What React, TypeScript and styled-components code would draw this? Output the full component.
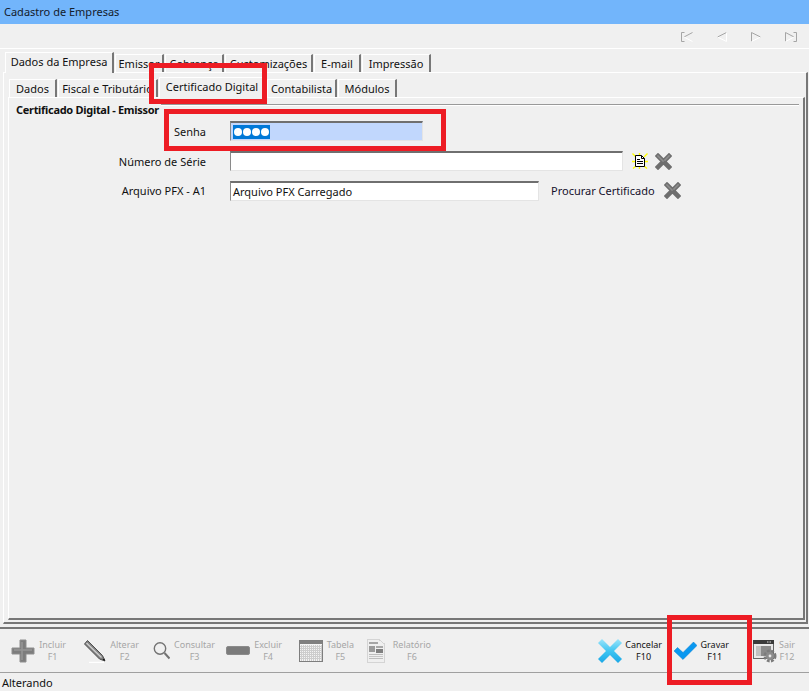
import React from "react";
import styled, { createGlobalStyle } from "styled-components";

const Global = createGlobalStyle`
  html, body {
    margin: 0;
    padding: 0;
    background: #f0f0f0;
  }
  * {
    box-sizing: border-box;
  }
`;

const Window = styled.div`
  position: relative;
  width: 809px;
  height: 691px;
  display: flex;
  flex-direction: column;
  overflow: hidden;
  background: #f0f0f0;
  color: #111;
  font-family: "Noto Sans", "Liberation Sans", sans-serif;
  font-size: 11px;
`;
const TitleBar = styled.div`
  height: 24px;
  flex: none;
  padding: 0 4px 2px;
  display: flex;
  align-items: center;
  background: #72b5fb;
  font-size: 11px;
  color: #14202c;
`;
const NavBar = styled.div`
  height: 25px;
  flex: none;
  display: flex;
  align-items: center;
  justify-content: flex-end;
  gap: 24px;
  padding: 1px 12px 0 0;
  border-bottom: 1px solid #fff;
`;
const Main = styled.div`
  flex: 1;
  min-height: 0;
  display: flex;
  flex-direction: column;
  padding: 3px 1px 3px 3px;
  border-bottom: 2px solid #777;
`;
const TabRow = styled.div<{ $inset: number }>`
  height: 20px;
  flex: none;
  display: flex;
  align-items: flex-end;
  padding-left: ${(p) => p.$inset}px;
  position: relative;
  z-index: 1;
`;
const Tab = styled.div<{ $w: number; $active?: boolean }>`
  width: ${(p) => p.$w}px;
  height: ${(p) => (p.$active ? 21 : 18)}px;
  margin-right: 1px;
  margin-bottom: ${(p) => (p.$active ? -1 : 0)}px;
  display: flex;
  align-items: center;
  justify-content: center;
  padding-bottom: ${(p) => (p.$active ? 3 : 0)}px;
  white-space: nowrap;
  background: #f0f0f0;
  border-top: 1px solid #fff;
  border-left: 1px solid #fff;
  border-right: 2px solid #777;
`;
const OuterPanel = styled.div`
  flex: 1;
  min-height: 0;
  display: flex;
  flex-direction: column;
  padding: 4px 1px 2px 4px;
  border-top: 1px solid #fff;
  border-left: 1px solid #fff;
  border-right: 2px solid #777;
  border-bottom: 2px solid #777;
`;
const InnerPanel = styled.div`
  flex: 1;
  min-height: 0;
  padding: 5px 4px 0 7px;
  border-top: 1px solid #fff;
  border-left: 1px solid #fff;
  border-right: 2px solid #777;
  border-bottom: 2px solid #777;
`;
const GroupTitle = styled.div`
  display: flex;
  align-items: flex-start;
  height: 13px;
  font-weight: 700;
  line-height: 14px;
  letter-spacing: -0.3px;
  white-space: nowrap;
  &::after {
    content: "";
    flex: 1;
    margin: 1px 0 0 2px;
    height: 1px;
    background: #999;
    box-shadow: 0 1px 0 #fff;
  }
`;
const Form = styled.div`
  display: flex;
  flex-direction: column;
`;
const FormRow = styled.div<{ $h: number }>`
  height: ${(p) => p.$h}px;
  display: flex;
  align-items: center;
`;
const Label = styled.div`
  width: 199px;
  padding-right: 9px;
  margin-right: 15px;
  text-align: right;
  white-space: nowrap;
`;
const Field = styled.div<{ $w: number; $selected?: boolean }>`
  width: ${(p) => p.$w}px;
  height: 20px;
  display: flex;
  align-items: center;
  padding-left: 2px;
  background: ${(p) => (p.$selected ? "#c1d7fd" : "#fff")};
  border-top: 2px solid #6f6f6f;
  border-left: 1px solid #8a8a8a;
  border-right: 1px solid #e4e4e4;
  border-bottom: 1px solid #e4e4e4;
`;
const SelectedDots = styled.span`
  display: flex;
  align-items: center;
  gap: 1px;
  height: 14px;
  padding: 0 1px;
  background: #0078d7;
`;
const Dot = styled.span`
  width: 8px;
  height: 8px;
  border-radius: 50%;
  background: #fff;
`;
const SideIcons = styled.div<{ $ml: number }>`
  display: flex;
  align-items: center;
  gap: 7px;
  margin-left: ${(p) => p.$ml}px;
`;
const PickText = styled.span`
  margin-left: 12px;
  margin-right: 9px;
  color: #15102c;
  white-space: nowrap;
`;
const Toolbar = styled.div`
  height: 44px;
  flex: none;
  display: flex;
  align-items: center;
  padding-right: 14px;
  border-bottom: 1px solid #a0a0a0;
`;
const ToolButton = styled.div<{ $w: number; $ml: number; $off?: boolean }>`
  width: ${(p) => p.$w}px;
  margin-left: ${(p) => p.$ml}px;
  display: flex;
  align-items: center;
  justify-content: space-between;
  color: ${(p) => (p.$off ? "#a6a6a6" : "#111")};
`;
const ToolLabel = styled.div`
  display: flex;
  flex-direction: column;
  align-items: center;
  font-size: 9px;
  line-height: 12px;
  white-space: nowrap;
`;
const Spacer = styled.div`
  flex: 1;
`;
const StatusBar = styled.div`
  height: 18px;
  flex: none;
  display: flex;
  align-items: center;
  padding-left: 2px;
  font-size: 11px;
  color: #111;
`;
const Mark = styled.div<{ $x: number; $y: number; $w: number; $h: number }>`
  position: absolute;
  z-index: 5;
  left: ${(p) => p.$x}px;
  top: ${(p) => p.$y}px;
  width: ${(p) => p.$w}px;
  height: ${(p) => p.$h}px;
  border: 5px solid #ed1c24;
  pointer-events: none;
`;

const GrayX = () => (
  <svg width="17" height="17" viewBox="0 0 17 17">
    <path d="M3 3 L14 14 M14 3 L3 14" stroke="#6e6e6e" strokeWidth="4.6" strokeLinecap="square" />
    <path d="M3 3 L8 8 M14 3 L10 7" stroke="#8d8d8d" strokeWidth="1.6" strokeLinecap="square" />
  </svg>
);

const NewDoc = () => (
  <svg width="16" height="16" viewBox="0 0 16 16">
    <path
      d="M0.5 0.5 L4 4 M15.5 0.5 L12 4 M0 8.5 L3.5 8.5 M12.5 8.5 L16 8.5 M1 15.5 L4 13 M15 15.5 L12 13 M7.5 0 L7.5 2 M7.5 14 L7.5 16"
      stroke="#ffff00"
      strokeWidth="1.4"
    />
    <path d="M3.5 2.5 H9.5 L12.5 5.5 V13.5 H3.5 Z" fill="#fff" stroke="#000" />
    <path d="M9.5 2.5 V5.5 H12.5 M5 6.5 H8 M5 8.5 H11 M5 10.5 H11" fill="none" stroke="#000" />
  </svg>
);

const NavFirst = () => (
  <svg width="12" height="10" viewBox="0 0 12 10" fill="none" stroke="#a5a5a5">
    <path d="M3.5 .5 H.5 V9.5 H3.5" />
    <path d="M11.5 .5 L3 5" />
    <path d="M3 5 L11.5 9.5" stroke="#fff" />
  </svg>
);
const NavPrev = () => (
  <svg width="10" height="10" viewBox="0 0 10 10" fill="none" stroke="#a5a5a5">
    <path d="M9.5 .5 L.5 5" />
    <path d="M.5 5 L9.5 9.5 V.5" stroke="#fff" />
  </svg>
);
const NavNext = () => (
  <svg width="10" height="10" viewBox="0 0 10 10" fill="none" stroke="#a5a5a5">
    <path d="M.5 9.5 V.5 L9.5 5" />
    <path d="M9.5 5 L.5 9.5" stroke="#fff" />
  </svg>
);
const NavLast = () => (
  <svg width="12" height="10" viewBox="0 0 12 10" fill="none" stroke="#a5a5a5">
    <path d="M8.5 .5 H11.5 V9.5 H8.5" />
    <path d="M.5 9.5 V.5 L9 5" />
    <path d="M9 5 L.5 9.5" stroke="#fff" />
  </svg>
);

const PlusIcon = () => (
  <svg width="24" height="24" viewBox="0 0 24 24">
    <path d="M9 1 H15 V9 H23 V15 H15 V23 H9 V15 H1 V9 H9 Z" fill="#7d7d7d" stroke="#8f8f8f" strokeLinejoin="round" />
    <path d="M11 3 V21 M3 11 H21" stroke="#969696" strokeWidth="1.5" />
  </svg>
);
const PencilIcon = () => (
  <svg width="22" height="24" viewBox="0 0 22 24">
    <path d="M0.5 5 L3.5 1.5 L18.5 16.5 L21 22 L15.5 20 Z" fill="#808080" stroke="#4f4f4f" />
    <path d="M2.5 4 L17.5 18.5" stroke="#d0d0d0" strokeWidth="1.3" />
    <path d="M18.5 20.5 L21 22 L20.4 19.5 Z" fill="#111" />
    <path d="M5 23.5 H20" stroke="#fff" strokeWidth="1.5" />
  </svg>
);
const SearchIcon = () => (
  <svg width="17" height="19" viewBox="0 0 17 19" fill="none">
    <circle cx="7" cy="7.5" r="5.7" stroke="#737373" strokeWidth="1.4" />
    <path d="M11.5 12 L16.5 17.5" stroke="#737373" strokeWidth="2" />
  </svg>
);
const MinusIcon = () => (
  <svg width="24" height="9" viewBox="0 0 24 9">
    <rect x="0.5" y="0.5" width="23" height="8" rx="1.5" fill="#7b7b7b" stroke="#8b8b8b" />
  </svg>
);
const GridIcon = () => {
  const cols: number[] = [];
  for (let i = 2; i < 24; i += 2) cols.push(i);
  return (
    <svg width="24" height="22" viewBox="0 0 24 22" shapeRendering="crispEdges">
      <rect x="0.5" y="0.5" width="23" height="21" rx="1" fill="#f4f4f4" stroke="#7e7e7e" />
      <rect x="1" y="1" width="22" height="3" fill="#808080" />
      {cols.map((v) => (
        <path key={v} d={`M${v + 0.5} 5 V21`} stroke="#cdcdcd" />
      ))}
      {[6, 8, 10, 12, 14, 16, 18].map((v) => (
        <path key={v} d={`M1 ${v + 0.5} H23`} stroke="#cdcdcd" />
      ))}
    </svg>
  );
};
const ReportIcon = () => (
  <svg width="18" height="24" viewBox="0 0 18 24" shapeRendering="crispEdges">
    <path d="M0.5 0.5 H12 L17.5 5 V23.5 H0.5 Z" fill="#efefef" stroke="#d4d4d4" />
    <rect x="2" y="3" width="9" height="2" fill="#a5a5a5" />
    <rect x="2" y="7" width="6" height="6" fill="#9b9b9b" />
    <rect x="9" y="7" width="7" height="2" fill="#a8a8a8" />
    <rect x="9" y="10" width="7" height="4" fill="#7f7f7f" />
    <rect x="2" y="15" width="14" height="1" fill="#bdbdbd" />
    <rect x="2" y="17" width="14" height="1" fill="#c6c6c6" />
    <rect x="2" y="19" width="14" height="1" fill="#bdbdbd" />
  </svg>
);
const CancelIcon = () => (
  <svg width="24" height="24" viewBox="0 0 24 24">
    <defs>
      <linearGradient id="cancelBlue" x1="0" y1="0" x2="0" y2="1">
        <stop offset="0" stopColor="#9be4fa" />
        <stop offset="0.5" stopColor="#3fc5f2" />
        <stop offset="1" stopColor="#1ba7e6" />
      </linearGradient>
    </defs>
    <path d="M0 4 L4 0 L12 8 L20 0 L24 4 L16 12 L24 20 L20 24 L12 16 L4 24 L0 20 L8 12 Z" fill="url(#cancelBlue)" />
  </svg>
);
const CheckIcon = () => (
  <svg width="23" height="18" viewBox="0 0 23 18">
    <path d="M0 9 L3.5 5.5 L9 10.5 L19.5 0 L23 3.5 L9 17.5 Z" fill="#0a98f0" stroke="#067fd0" strokeWidth="0.5" />
  </svg>
);
const ExitIcon = () => (
  <svg width="24" height="24" viewBox="0 0 24 24">
    <rect x="0.5" y="1.5" width="20" height="18" fill="#e8e8e8" stroke="#666" />
    <rect x="0" y="1" width="21" height="4" fill="#3a3a3a" />
    <path d="M14 3 H15.5 M16.5 3 H18" stroke="#ddd" />
    <rect x="3" y="7" width="15" height="10" fill="#8a8a8a" />
    <rect x="3" y="7" width="5" height="10" fill="#c0c0c0" />
    <circle cx="17" cy="17" r="4.5" fill="none" stroke="#7b7b7b" strokeWidth="4" strokeDasharray="2.4 1.2" />
    <circle cx="17" cy="17" r="4" fill="#8c8c8c" />
    <circle cx="17" cy="17" r="1.4" fill="#e8e8e8" />
  </svg>
);

const outerTabs = [
  { label: "Dados da Empresa", w: 109, active: true },
  { label: "Emissor", w: 49 },
  { label: "Cobrança", w: 59 },
  { label: "Customizações", w: 88 },
  { label: "E-mail", w: 47 },
  { label: "Impressão", w: 69 },
];
const innerTabs = [
  { label: "Dados", w: 48 },
  { label: "Fiscal e Tributário", w: 100 },
  { label: "Certificado Digital", w: 107, active: true },
  { label: "Contabilista", w: 70 },
  { label: "Módulos", w: 59 },
];

const leftTools = [
  { name: "Incluir", key: "F1", icon: <PlusIcon />, w: 55, ml: 11 },
  { name: "Alterar", key: "F2", icon: <PencilIcon />, w: 55, ml: 18 },
  { name: "Consultar", key: "F3", icon: <SearchIcon />, w: 62, ml: 14 },
  { name: "Excluir", key: "F4", icon: <MinusIcon />, w: 56, ml: 11 },
  { name: "Tabela", key: "F5", icon: <GridIcon />, w: 55, ml: 17 },
  { name: "Relatório", key: "F6", icon: <ReportIcon />, w: 64, ml: 13 },
];

const App: React.FC = () => {
  return (
    <Window>
      <Global />
      <TitleBar>Cadastro de Empresas</TitleBar>
      <NavBar>
        <NavFirst />
        <NavPrev />
        <NavNext />
        <NavLast />
      </NavBar>
      <Main>
        <TabRow $inset={2}>
          {outerTabs.map((t) => (
            <Tab key={t.label} $w={t.w} $active={t.active}>
              {t.label}
            </Tab>
          ))}
        </TabRow>
        <OuterPanel>
          <TabRow $inset={1}>
            {innerTabs.map((t) => (
              <Tab key={t.label} $w={t.w} $active={t.active}>
                {t.label}
              </Tab>
            ))}
          </TabRow>
          <InnerPanel>
            <GroupTitle>Certificado Digital - Emissor</GroupTitle>
            <Form>
              <FormRow $h={30}>
                <Label>Senha</Label>
                <Field $w={193} $selected>
                  <SelectedDots>
                    <Dot />
                    <Dot />
                    <Dot />
                    <Dot />
                  </SelectedDots>
                </Field>
              </FormRow>
              <FormRow $h={30}>
                <Label>Número de Série</Label>
                <Field $w={393} />
                <SideIcons $ml={9}>
                  <NewDoc />
                  <GrayX />
                </SideIcons>
              </FormRow>
              <FormRow $h={29}>
                <Label>Arquivo PFX - A1</Label>
                <Field $w={309}>Arquivo PFX Carregado</Field>
                <PickText>Procurar Certificado</PickText>
                <GrayX />
              </FormRow>
            </Form>
          </InnerPanel>
        </OuterPanel>
      </Main>
      <Toolbar>
        {leftTools.map((t) => (
          <ToolButton key={t.name} $w={t.w} $ml={t.ml} $off>
            {t.icon}
            <ToolLabel>
              <span>{t.name}</span>
              <span>{t.key}</span>
            </ToolLabel>
          </ToolButton>
        ))}
        <Spacer />
        <ToolButton $w={64} $ml={0}>
          <CancelIcon />
          <ToolLabel>
            <span>Cancelar</span>
            <span>F10</span>
          </ToolLabel>
        </ToolButton>
        <ToolButton $w={55} $ml={12}>
          <CheckIcon />
          <ToolLabel>
            <span>Gravar</span>
            <span>F11</span>
          </ToolLabel>
        </ToolButton>
        <ToolButton $w={42} $ml={24} $off>
          <ExitIcon />
          <ToolLabel>
            <span>Sair</span>
            <span>F12</span>
          </ToolLabel>
        </ToolButton>
      </Toolbar>
      <StatusBar>Alterando</StatusBar>
      <Mark $x={149} $y={63} $w={118} $h={41} />
      <Mark $x={164} $y={109} $w={282} $h={42} />
      <Mark $x={667} $y={615} $w={85} $h={70} />
    </Window>
  );
};

export default App;
